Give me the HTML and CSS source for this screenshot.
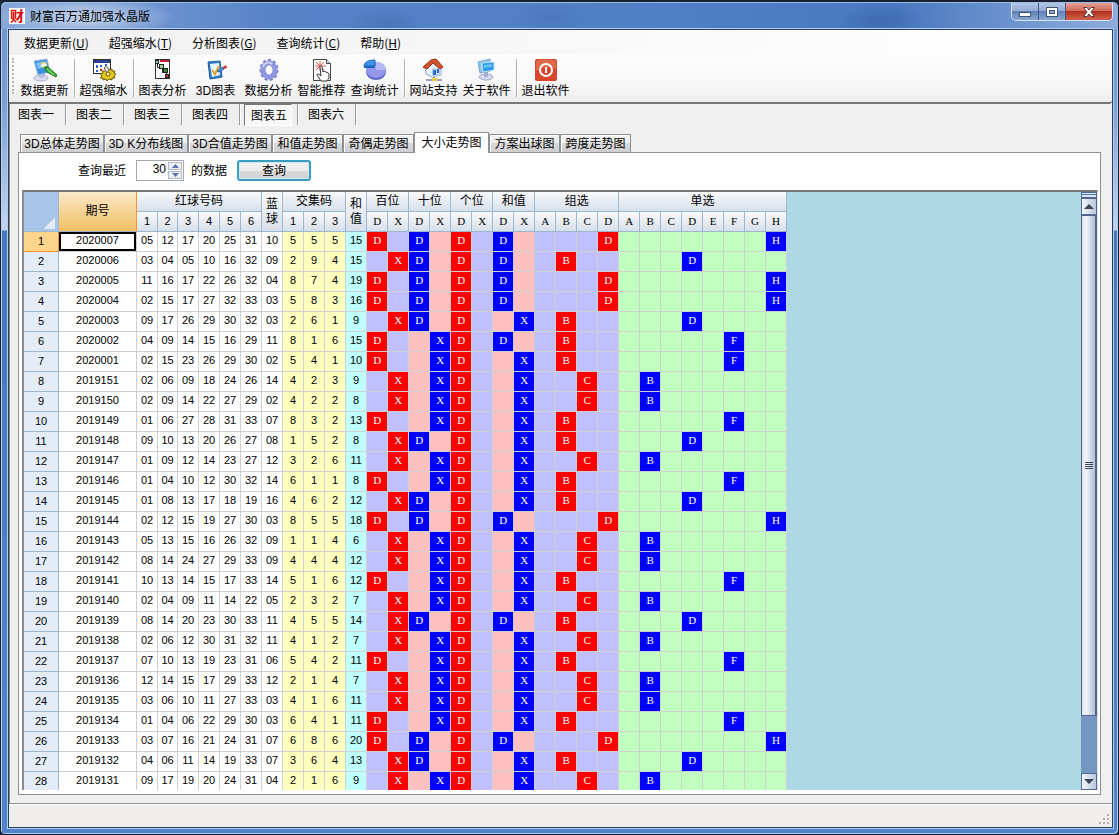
FILE: index.html
```html
<!DOCTYPE html>
<html lang="zh-CN">
<head>
  <meta charset="UTF-8">
  <meta name="viewport" content="width=device-width,initial-scale=1">
  <title>财富百万通加强水晶版</title>
  <link rel="stylesheet" href="styles.css">
</head>
<body>
<div class="window">
  <header class="titlebar">
    <span class="app-icon">财</span>
    <h1 class="app-title">财富百万通加强水晶版</h1>
    <div class="win-controls">
      <button class="win-btn" aria-label="最小化"><svg width="14" height="12"><rect x="1.5" y="6.5" width="11" height="4" fill="#fff" stroke="#44556f"/></svg></button>
      <button class="win-btn" aria-label="最大化"><svg width="14" height="12"><rect x="1.5" y="1.5" width="11" height="9" fill="#fff" stroke="#44556f"/><rect x="4.5" y="4.5" width="5" height="3" fill="#8fa9cf" stroke="#44556f"/></svg></button>
      <button class="win-btn close" aria-label="关闭"><svg width="14" height="12"><path d="M1.5 1.500h3.500l2 2.500 2-2.500h3.500L9 6l3.500 4.500H9L7 8l-2 2.500H1.500L5 6z" fill="#fff" stroke="#5c3a3c"/></svg></button>
    </div>
  </header>

  <div class="client">
    <nav class="menubar">
      <button>数据更新(<u>U</u>)</button>
      <button>超强缩水(<u>T</u>)</button>
      <button>分析图表(<u>G</u>)</button>
      <button>查询统计(<u>C</u>)</button>
      <button>帮助(<u>H</u>)</button>
    </nav>

    <div class="toolbar">
      <button class="tool">
        <svg width="24" height="24" viewBox="0 0 24 24">
          <ellipse cx="8" cy="20" rx="7" ry="3" fill="#dcdff0" stroke="#a9aecb"/>
          <path d="M6 15l6 1-1 4H6z" fill="#b9bedb"/>
          <path d="M1 3l13-2 3 13-12 3z" fill="#3c93dc" stroke="#9fbbe0"/>
          <path d="M3 5l10-2 1 5-9 3z" fill="#7cc4f4"/>
          <circle cx="11" cy="7" r="3" fill="#f0c860"/>
          <path d="M7 8l4-3 3 2-3 2z" fill="#fff"/>
          <path d="M11 9l4 0 9 8-1 2-9-5z" fill="#3fae3a" stroke="#1f7a2a"/>
          <path d="M14 11l7 6" stroke="#a6e389"/>
        </svg>
        <span>数据更新</span>
      </button>
      <i class="sep"></i>
      <button class="tool">
        <svg width="24" height="24" viewBox="0 0 24 24">
          <rect x="1.500" y="1.500" width="17" height="14" fill="#fff" stroke="#333"/>
          <rect x="2" y="2" width="16" height="3" fill="#2a3f94"/>
          <path d="M4 7h2v3H4zM8 7h2v2H8zM4 12h2v2H4zM13 6h2v2h-2z" fill="#2f5fd6"/>
          <path d="M8 11h2v2H8zM12 9h2v2h-2z" fill="#d22"/>
          <g fill="#e3c51f" stroke="#6f5d08">
            <path d="M16 10l2 2 2-1 0 2 3 0-1 2 2 1-2 2 1 2-3 0 0 2-3-1-2 2-1-2-3 1 0-2-3 0 2-2-2-2 3-1-1-2 3 0z"/>
            <circle cx="16" cy="16" r="2" fill="#fff3a0"/>
          </g>
          <path d="M13 9c2-2 4 0 3 5l-3-1z" fill="#eee" stroke="#777"/>
        </svg>
        <span>超强缩水</span>
      </button>
      <i class="sep"></i>
      <button class="tool">
        <svg width="24" height="24" viewBox="0 0 24 24">
          <rect x="4.500" y="1.500" width="14" height="19" fill="#fff" stroke="#333"/>
          <rect x="9" y="2" width="9" height="2" fill="#c8202c"/>
          <path d="M6.500 6v3.500h4M11.500 11v3.500h4M15.500 14v3" fill="none" stroke="#222"/>
          <rect x="4.500" y="2.500" width="3" height="3" fill="#7fd3c4" stroke="#222"/>
          <rect x="8.500" y="6.500" width="4" height="4" fill="#9fd38e" stroke="#222"/>
          <rect x="12.500" y="10.500" width="4" height="4" fill="#2f8a3a" stroke="#222"/>
          <rect x="14.500" y="16.500" width="3" height="3" fill="#c33" stroke="#222"/>
        </svg>
        <span>图表分析</span>
      </button>
      <button class="tool">
        <svg width="24" height="24" viewBox="0 0 24 24">
          <path d="M4 4l12-1 2 16-12 2z" fill="#2e7fd0" stroke="#1c5a9c"/>
          <path d="M6 6l9-1 1 12-8 2z" fill="#e8f5ff"/>
          <path d="M8 12l3 4 4-8" fill="none" stroke="#e5a01e" stroke-width="2"/>
          <path d="M13 13l6-4 1 2-5 3z" fill="#5ea2e4" stroke="#235a9f"/>
          <path d="M19 9l3-2 1 3-3 1z" fill="#d23636"/>
        </svg>
        <span>3D图表</span>
      </button>
      <button class="tool">
        <svg width="24" height="24" viewBox="0 0 24 24">
          <ellipse cx="12" cy="12" rx="8" ry="9.500" fill="none" stroke="#7a7fc6" stroke-width="3" stroke-dasharray="3 2"/>
          <ellipse cx="12" cy="12" rx="6" ry="7" fill="none" stroke="#8f97e0" stroke-width="5"/>
          <path d="M6 9c1-4 5-6 9-3" fill="none" stroke="#cbd0fa" stroke-width="2"/>
        </svg>
        <span>数据分析</span>
      </button>
      <button class="tool">
        <svg width="24" height="24" viewBox="0 0 24 24">
          <path d="M3.500 1.500h13l4 4v17h-17z" fill="#fff" stroke="#444"/>
          <path d="M16.500 1.500v4h4" fill="#ddd" stroke="#444"/>
          <path d="M10 3v10M5 8h11M6 4l8 8M14 4l-8 8" stroke="#e05555"/>
          <path d="M10 9c0-2 2-2 2 0l1 5 1-1 2 1 2 1 1 1v4l-2 3h-6l-4-6c0-2 2-1 4 1z" fill="#fff" stroke="#333"/>
        </svg>
        <span>智能推荐</span>
      </button>
      <button class="tool">
        <svg width="24" height="24" viewBox="0 0 24 24">
          <ellipse cx="13" cy="14" rx="10" ry="8" fill="#5d66c4"/>
          <ellipse cx="13" cy="12" rx="10" ry="8" fill="#9297ea"/>
          <path d="M13 12L13 4A10 8 0 0 1 23 12z" fill="#b4b8f7"/>
          <path d="M12 8L1 8C1 4 6 2 12 2z" fill="#3d93ea" stroke="#1d60b8"/>
          <path d="M1 8v2h10l1-2z" fill="#1f65bd"/>
        </svg>
        <span>查询统计</span>
      </button>
      <i class="sep"></i>
      <button class="tool">
        <svg width="24" height="24" viewBox="0 0 24 24">
          <path d="M12 18v4M4 22h16" stroke="#9aa4b4" stroke-width="2"/>
          <rect x="10" y="20" width="5" height="3" fill="#e8c93c"/>
          <path d="M3 9l6-5 10 6v7l-9 2-6-3z" fill="#e4effc" stroke="#90a6c4"/>
          <path d="M10 10l9 0v7l-9 2z" fill="#bcd6f3"/>
          <path d="M1 9l8-7 5-1 7 8-3 2-7-6-6 6z" fill="#d3512c" stroke="#9b3216"/>
          <path d="M11 12h3v5h-3zM15 11h2v4h-2z" fill="#2a6fcf"/>
        </svg>
        <span>网站支持</span>
      </button>
      <button class="tool">
        <svg width="24" height="24" viewBox="0 0 24 24">
          <ellipse cx="11" cy="19" rx="7" ry="3" fill="#d8dbee" stroke="#a2a7c6"/>
          <path d="M9 13h4v6H9z" fill="#a9aed0"/>
          <path d="M3 4l12-3 1 12-11 2z" fill="#8fc7f0" stroke="#7aa5d2"/>
          <path d="M7 5l12-1v8l-11 2z" fill="#2e97e8" stroke="#c6e4fb"/>
          <path d="M9 7l8-1v3l-8 1z" fill="#64c4fa"/>
        </svg>
        <span>关于软件</span>
      </button>
      <i class="sep"></i>
      <button class="tool">
        <svg width="24" height="24" viewBox="0 0 24 24">
          <rect x="1" y="1" width="22" height="22" rx="2" fill="#d8452a"/>
          <path d="M2 3c5-2 15-2 20 0v8C15 8 8 9 2 13z" fill="#e0694a"/>
          <circle cx="12" cy="12" r="6" fill="none" stroke="#fff" stroke-width="2"/>
          <path d="M12 9v6" stroke="#fff" stroke-width="2"/>
        </svg>
        <span>退出软件</span>
      </button>
    </div>

    <div class="chart-bar">
      <button>图表一</button><i></i>
      <button>图表二</button><i></i>
      <button>图表三</button><i></i>
      <button>图表四</button><i></i>
      <button class="pressed">图表五</button><i></i>
      <button>图表六</button><i></i>
    </div>

    <main class="content">
      <div class="tabs" role="tablist">
        <button class="tab wide" role="tab">3D总体走势图</button>
        <button class="tab wide" role="tab">3D K分布线图</button>
        <button class="tab wide" role="tab">3D合值走势图</button>
        <button class="tab" role="tab">和值走势图</button>
        <button class="tab" role="tab">奇偶走势图</button>
        <button class="tab active" role="tab" aria-selected="true">大小走势图</button>
        <button class="tab" role="tab">方案出球图</button>
        <button class="tab" role="tab">跨度走势图</button>
      </div>

      <section class="page">
        <form class="query">
          <label for="count">查询最近</label>
          <span class="spinner">
            <input id="count" type="text" value="30">
            <span class="spin-btns">
              <button type="button" aria-label="增加"><svg width="7" height="4"><path d="M0 4l3.500-4L7 4z" fill="#5a6fae"/></svg></button>
              <button type="button" aria-label="减少"><svg width="7" height="4"><path d="M0 0l3.500 4L7 0z" fill="#5a6fae"/></svg></button>
            </span>
          </span>
          <span>的数据</span>
          <button type="button" class="query-btn">查询</button>
        </form>

        <div class="grid-box">
          <div class="grid-view">
            <table class="grid">
              <colgroup>
                <col class="c-row"><col class="c-issue">
                <col><col class="c-thin"><col span="25">
              </colgroup>
              <thead>
                <tr>
                  <th rowspan="2" class="corner"></th>
                  <th rowspan="2" class="issue-head">期号</th>
                  <th colspan="6">红球号码</th>
                  <th rowspan="2" class="stack">蓝<br>球</th>
                  <th colspan="3">交集码</th>
                  <th rowspan="2" class="stack">和<br>值</th>
                  <th colspan="2">百位</th>
                  <th colspan="2">十位</th>
                  <th colspan="2">个位</th>
                  <th colspan="2">和值</th>
                  <th colspan="4">组选</th>
                  <th colspan="8">单选</th>
                </tr>
                <tr id="subhead"></tr>
              </thead>
              <tbody id="rows"></tbody>
            </table>
          </div>
          <div class="scrollbar">
            <div class="split"></div>
            <button class="arrow" aria-label="向上"><svg width="10" height="5"><path d="M0 5l5-5 5 5z" fill="#3e4759"/></svg></button>
            <div class="thumb"><i></i><i></i><i></i><i></i></div>
            <div class="track"></div>
            <button class="arrow" aria-label="向下"><svg width="10" height="5"><path d="M0 0l5 5 5-5z" fill="#3e4759"/></svg></button>
          </div>
        </div>
      </section>
    </main>

    <footer class="statusbar">
      <svg width="12" height="12" fill="#b5b0ac"><path d="M8 0h2v2H8zM4 4h2v2H4zM8 4h2v2H8zM0 8h2v2H0zM4 8h2v2H4zM8 8h2v2H8z"/></svg>
    </footer>
  </div>
</div>
<script src="script.js"></script>
</body>
</html>
```
FILE: styles.css
```css
*, *::before, *::after { box-sizing:border-box; margin:0; padding:0 }
html, body { height:100%; overflow:hidden }
body {
  font-family:"Liberation Sans","Noto Sans CJK SC",sans-serif;
  font-size:12px;
  line-height:16px;
  color:#000;
  background:#1b2536;
}
button { font:inherit; color:inherit; background:none; border:none; }
svg { display:block; }

/* window frame */
.window {
  height:100vh;
  display:flex; flex-direction:column;
  padding:0 5px 6px 7px;
  border:1px solid #16202f;
  border-top-width:2px;
  border-radius:7px 7px 5px 5px;
  background:linear-gradient(#6b93cf 0, #7b9fd4 100px, #c3d4ee 228px, #4678c0 229px, #5183c8 100%);
  box-shadow:inset 1px 1px 0 #b9d2f0, inset -1px -1px 0 #a9cdee;
}
.titlebar {
  flex:none;
  height:27px;
  margin:0 -5px 0 -7px;
  padding-left:8px;
  display:flex; align-items:center; gap:5px;
  border-radius:5px 5px 0 0;
  border-top:1px solid #9dbde8;
  background:
    radial-gradient(ellipse 90px 20px at 85px 14px, rgba(214,226,243,.85), transparent),
    radial-gradient(ellipse 40px 14px at 385px 20px, rgba(48,88,150,.3), transparent),
    radial-gradient(ellipse 40px 16px at 550px 14px, rgba(48,88,150,.2), transparent),
    radial-gradient(ellipse 45px 16px at 880px 18px, rgba(36,76,142,.3), transparent),
    linear-gradient(90deg, #86a5d7, #5683c8 25%, #4f7fc6 60%, #4878c0 80%, #8eacdc);
}
.app-icon {
  width:16px; height:16px;
  font-size:14px; font-weight:700; line-height:16px; text-align:center;
  color:#e00000; background:#fff;
}
.app-title { font-size:12px; font-weight:400; font-family:"Noto Sans CJK SC",sans-serif; }
.win-controls {
  display:flex;
  align-self:flex-start;
  margin-left:auto; margin-right:5px;
  height:18px;
  border:1px solid #d4e2f4; border-top:none;
  border-radius:0 0 5px 5px;
  overflow:hidden;
}
.win-btn {
  width:27px;
  display:flex; align-items:center; justify-content:center;
  border-right:1px solid #415a84;
  background:linear-gradient(#b3c6e4 0, #93add6 45%, #5e80b5 50%, #88a8d6);
}
.win-btn.close {
  width:46px;
  border:none;
  background:linear-gradient(#e2a294 0, #cf6a58 45%, #b03121 50%, #d0634c);
}

.client {
  flex:1; min-height:0;
  display:flex; flex-direction:column;
  border:1px solid #27405f;
  background:#efefef;
  box-shadow:0 0 0 1px #b2cdee;
}

.menubar {
  flex:none;
  height:25px;
  padding-left:5px;
  display:flex;
  font-family:"Noto Sans CJK SC",sans-serif;
  background:linear-gradient(90deg, #f0f0f0, #fdfdfd 80%);
}
.menubar button { padding:0 10px; }

.toolbar {
  flex:none;
  height:49px;
  padding:3px 0 0 3px;
  display:flex;
  background:linear-gradient(#fdfdfd, #f6f6f6 70%, #ececec);
  border-bottom:2px solid #777;
  border-radius:0 0 3px 0;
}
.toolbar::before {
  content:"";
  width:6px; height:36px;
  border-left:2px dotted #b4b4b4;
}
.tool {
  width:53px;
  display:flex; flex-direction:column; align-items:center; gap:1px;
  white-space:nowrap;
}
.sep {
  width:6px; height:38px;
  margin-top:1px;
  background:linear-gradient(90deg, transparent 3px, #b0b0b0 3px, #b0b0b0 4px, #fff 4px, #fff 5px, transparent 5px);
}

.chart-bar {
  flex:none;
  height:24px;
  padding-left:2px;
  display:flex;
  border-left:1px solid #8a8a8a;
}
.chart-bar button {
  width:48px; height:22px;
  white-space:nowrap;
}
.chart-bar i {
  width:10px; height:21px;
  background:linear-gradient(90deg, transparent 5px, #9a9a9a 5px, #9a9a9a 6px, #fff 6px, #fff 7px, transparent 7px);
}
.chart-bar .pressed {
  padding:2px 0 0 2px;
  border:1px solid #777;
  border-right-color:#fff; border-bottom-color:#fff;
  background:#f7f7f7;
}

/* tab control */
.content {
  flex:1; min-height:0;
  display:flex; flex-direction:column;
  padding:4px 11px 8px 8px;
  border-left:1px solid #8a8a8a;
}
.tabs {
  flex:none;
  height:20px;
  padding-left:2px;
  display:flex; align-items:flex-end;
}
.tab {
  width:71px; height:18px;
  white-space:nowrap;
  border:1px solid #8e8f94; border-bottom:none;
  box-shadow:inset 1px 1px 0 #fff;
  background:linear-gradient(#f3f3f3 0, #ececec 50%, #d9d9da 50%, #cfcfd2);
}
.tab.wide { width:84px; }
.tab.active {
  width:75px; height:21px;
  margin-bottom:-1px;
  z-index:1;
  background:#fff;
}
.page {
  flex:1; min-height:0;
  display:flex; flex-direction:column;
  padding:0 2px 4px 3px;
  border:1px solid #8e8f94;
  background:#fff;
}
.query {
  flex:none;
  height:37px;
  padding:0 0 2px 56px;
  display:flex; align-items:center;
}
.spinner {
  width:48px; height:21px;
  margin:0 7px 0 10px;
  padding:1px;
  display:flex;
  border:1px solid #a4a8ad;
}
.spinner input {
  flex:1; min-width:0;
  padding-right:2px; padding-bottom:3px;
  border:none; outline:none;
  font:inherit; text-align:right;
  background:#fff;
}
.spin-btns { width:14px; display:flex; flex-direction:column; gap:1px; }
.spin-btns button {
  flex:1;
  display:flex; align-items:center; justify-content:center;
  border:1px solid #b4b8bf;
  background:#eef0f3;
}
.query-btn {
  width:74px; height:21px;
  margin-left:10px;
  border:2px solid #3c9cbf;
  border-radius:3px;
  line-height:16px;
  box-shadow:inset 0 0 0 1px #c9ecf7;
  background:linear-gradient(#f3f3f3 0, #ebebeb 50%, #dadada 50%, #d0d0d0);
}

/* data grid */
.grid-box {
  flex:1; min-height:0;
  display:flex;
  border-top:2px solid #777;
  border-left:2px solid #8c8c8c;
  border-right:1px solid #dedede;
  background:#add8e6;
}
.grid-view { flex:1; min-width:0; overflow:hidden; }
.grid {
  width:763px;
  table-layout:fixed;
  border-collapse:separate; border-spacing:0;
  font-size:11px;
}
.grid col { width:21px; }
.grid .c-row { width:35px; }
.grid .c-issue { width:78px; }
.grid .c-thin { width:20px; }
.grid tr { height:20px; }
.grid th, .grid td {
  height:20px;
  line-height:17px;
  text-align:center; font-weight:400;
  white-space:nowrap;
  border-right:1px solid #d0d0d0;
  border-bottom:1px solid #d0d0d0;
}
.grid td { padding-bottom:2px; }
.grid thead th {
  font-size:12px;
  border-color:#9eb6ce;
  background:linear-gradient(#f9fafc, #d6dfea);
}
.grid #subhead th { font-size:11px; }
.grid th.stack { line-height:15px; }
.grid th.corner {
  background:linear-gradient(135deg, transparent 50%, #e4ecf7 50%) 20px 26px / 11px 11px no-repeat, #a9c4e9;
}
.grid th.issue-head {
  border-right-color:#f29536;
  background:linear-gradient(#fbe9c9, #f1be62);
}
.grid tbody th { border-color:#9eb6ce; background:#e4ecf7; }
.grid tbody th.current { background:#ffd58d; border-color:#f29536; }
.grid td { background:#fff; }
.grid td.current { box-shadow:inset 0 0 0 2px #000; }
.grid td.trio { background:#ffffc0; }
.grid td.sum { background:#c0ffff; }
.grid td.lilac { background:#c0c0ff; }
.grid td.pink { background:#ffc0c0; }
.grid td.green { background:#c0ffc0; }
.grid td.mark, .grid th.letter {
  font-family:"Liberation Serif",serif;
  font-size:11px;
}
.grid td.mark { color:#fff; background:#f00; }
.grid td.mark.pink, .grid td.mark.green { background:#00f; }

.scrollbar {
  width:16px;
  display:flex; flex-direction:column;
  background:#7596c0;
}
.split {
  height:6px;
  border:1px solid #54699a;
  background:linear-gradient(#d8e8fa 1px, #54799f 1px, #54799f 2px, #d8e8fa 2px);
}
.arrow {
  height:17px;
  display:flex; align-items:center; justify-content:center;
  border:1px solid #54699a;
  background:linear-gradient(90deg, #f4f7fb, #b8c8dc);
}
.thumb {
  flex:502;
  display:flex; flex-direction:column; align-items:center; justify-content:center; gap:1px;
  border:1px solid #59628c; border-right-width:2px;
  background:linear-gradient(90deg, #dde3ee, #f1f4f8 30%, #b0c0d4);
}
.thumb i { width:8px; height:1px; background:#3e4759; }
.track { flex:57; }

.statusbar {
  flex:none;
  height:24px;
  display:flex; align-items:flex-end; justify-content:flex-end;
  padding:0 1px 1px 0;
  border-top:1px solid #8e8f94;
  box-shadow:inset 0 1px 0 #fff;
  background:#f0eeed;
}
```
FILE: script.js
```js
// issue, six red balls, blue ball, three cross digits, sum
const draws = [
  '2020007 05 12 17 20 25 31 10 5 5 5 15',
  '2020006 03 04 05 10 16 32 09 2 9 4 15',
  '2020005 11 16 17 22 26 32 04 8 7 4 19',
  '2020004 02 15 17 27 32 33 03 5 8 3 16',
  '2020003 09 17 26 29 30 32 03 2 6 1 9',
  '2020002 04 09 14 15 16 29 11 8 1 6 15',
  '2020001 02 15 23 26 29 30 02 5 4 1 10',
  '2019151 02 06 09 18 24 26 14 4 2 3 9',
  '2019150 02 09 14 22 27 29 02 4 2 2 8',
  '2019149 01 06 27 28 31 33 07 8 3 2 13',
  '2019148 09 10 13 20 26 27 08 1 5 2 8',
  '2019147 01 09 12 14 23 27 12 3 2 6 11',
  '2019146 01 04 10 12 30 32 14 6 1 1 8',
  '2019145 01 08 13 17 18 19 16 4 6 2 12',
  '2019144 02 12 15 19 27 30 03 8 5 5 18',
  '2019143 05 13 15 16 26 32 09 1 1 4 6',
  '2019142 08 14 24 27 29 33 09 4 4 4 12',
  '2019141 10 13 14 15 17 33 14 5 1 6 12',
  '2019140 02 04 09 11 14 22 05 2 3 2 7',
  '2019139 08 14 20 23 30 33 11 4 5 5 14',
  '2019138 02 06 12 30 31 32 11 4 1 2 7',
  '2019137 07 10 13 19 23 31 06 5 4 2 11',
  '2019136 12 14 15 17 29 33 12 2 1 4 7',
  '2019135 03 06 10 11 27 33 03 4 1 6 11',
  '2019134 01 04 06 22 29 30 03 6 4 1 11',
  '2019133 03 07 16 21 24 31 07 6 8 6 20',
  '2019132 04 06 11 14 19 33 07 3 6 4 13',
  '2019131 09 17 19 20 24 31 04 2 1 6 9'
];

const groups = [['DX','lilac'], ['DX','pink'], ['DX','lilac'], ['DX','pink'], ['ABCD','lilac'], ['ABCDEFGH','green']];

document.getElementById('subhead').innerHTML =
  [...'123456123'].map(n => `<th>${n}</th>`).join('') +
  groups.map(g => [...g[0]].map(c => `<th class="letter">${c}</th>`).join('')).join('');

function marks(v) {
  const bai = v[8] >= 5 ? 'D' : 'X';
  const shi = v[9] >= 5 ? 'D' : 'X';
  const he = v[11] >= 14 ? 'D' : 'X';
  const zu = {DD:'D', DX:'B', XD:'B', XX:'C'}[bai + shi];
  const dan = {DD:'H', DX:'F', XD:'D', XX:'B'}[bai + shi];
  return [bai, shi, 'D', he, zu, dan];
}

document.getElementById('rows').innerHTML = draws.map((line, i) => {
  const v = line.split(' ');
  const m = marks(v);
  const cur = i === 0 ? ' class="current"' : '';
  let html = `<tr><th${cur}>${i + 1}</th><td${cur}>${v[0]}</td>`;
  for (let k = 1; k < v.length; k++) {
    const cls = k === 11 ? 'sum' : k > 7 ? 'trio' : 'ball';
    html += `<td class="${cls}">${v[k]}</td>`;
  }
  groups.forEach(([letters, color], g) => {
    for (const c of letters) {
      html += c === m[g] ? `<td class="${color} mark">${c}</td>` : `<td class="${color}"></td>`;
    }
  });
  return html + '</tr>';
}).join('');
```
